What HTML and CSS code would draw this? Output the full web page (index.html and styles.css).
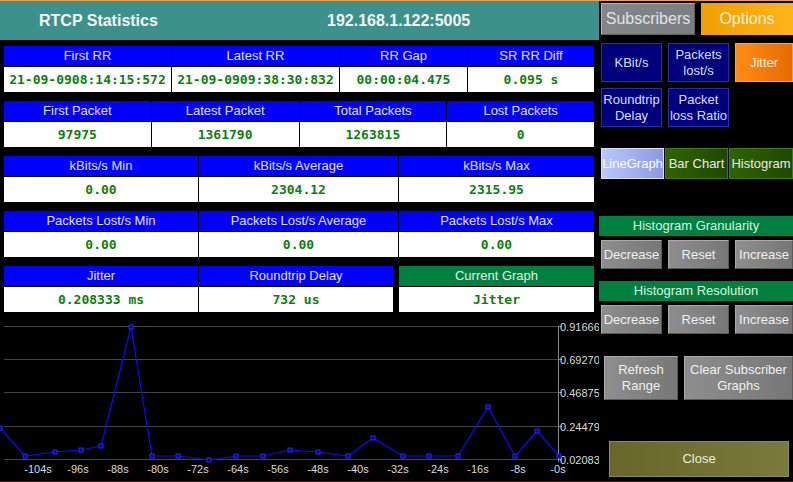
FILE: index.html
```html
<!DOCTYPE html>
<html>
<head>
<meta charset="utf-8">
<link rel="stylesheet" href="styles.css">
</head>
<body>
<div class="app">
  <div class="left">
    <div class="title-bar"><span class="title">RTCP Statistics</span><span class="addr">192.168.1.122:5005</span></div>
    <div class="tables">
      <div class="stat t1">
        <div class="h">First RR</div><div class="h">Latest RR</div><div class="h">RR Gap</div><div class="h">SR RR Diff</div>
        <div class="v">21-09-0908:14:15:572</div><div class="v">21-09-0909:38:30:832</div><div class="v">00:00:04.475</div><div class="v">0.095 s</div>
      </div>
      <div class="stat t2">
        <div class="h">First Packet</div><div class="h">Latest Packet</div><div class="h">Total Packets</div><div class="h">Lost Packets</div>
        <div class="v">97975</div><div class="v">1361790</div><div class="v">1263815</div><div class="v">0</div>
      </div>
      <div class="stat t3">
        <div class="h">kBits/s Min</div><div class="h">kBits/s Average</div><div class="h">kBits/s Max</div>
        <div class="v">0.00</div><div class="v">2304.12</div><div class="v">2315.95</div>
      </div>
      <div class="stat t3">
        <div class="h">Packets Lost/s Min</div><div class="h">Packets Lost/s Average</div><div class="h">Packets Lost/s Max</div>
        <div class="v">0.00</div><div class="v">0.00</div><div class="v">0.00</div>
      </div>
      <div class="stat t5">
        <div class="h">Jitter</div><div class="h">Roundtrip Delay</div><div class="sp"></div><div class="h hg">Current Graph</div>
        <div class="v">0.208333 ms</div><div class="v">732 us</div><div class="sp"></div><div class="v">Jitter</div>
      </div>
    </div>
    <svg class="graph" width="599" height="169" viewBox="0 312 599 169">
      <g class="grid">
        <line x1="4" y1="326.5" x2="558" y2="326.5"/>
        <line x1="4" y1="359.5" x2="558" y2="359.5"/>
        <line x1="4" y1="392.5" x2="558" y2="392.5"/>
        <line x1="4" y1="426.5" x2="558" y2="426.5"/>
        <line x1="4" y1="459.5" x2="558" y2="459.5"/>
      </g>
      <g class="axis">
        <line x1="558.5" y1="326" x2="558.5" y2="462"/>
        <line x1="558" y1="326.5" x2="562" y2="326.5"/>
        <line x1="558" y1="359.5" x2="562" y2="359.5"/>
        <line x1="558" y1="392.5" x2="562" y2="392.5"/>
        <line x1="558" y1="426.5" x2="562" y2="426.5"/>
        <line x1="558" y1="459.5" x2="562" y2="459.5"/>
      </g>
      <g class="ylab">
        <text x="560" y="327">0.91666</text>
        <text x="560" y="360">0.69270</text>
        <text x="560" y="393">0.46875</text>
        <text x="560" y="427">0.24479</text>
        <text x="560" y="460">0.02083</text>
      </g>
      <g class="xlab">
        <text x="38" y="469">-104s</text>
        <text x="78" y="469">-96s</text>
        <text x="118" y="469">-88s</text>
        <text x="158" y="469">-80s</text>
        <text x="198" y="469">-72s</text>
        <text x="238" y="469">-64s</text>
        <text x="278" y="469">-56s</text>
        <text x="318" y="469">-48s</text>
        <text x="358" y="469">-40s</text>
        <text x="398" y="469">-32s</text>
        <text x="438" y="469">-24s</text>
        <text x="478" y="469">-16s</text>
        <text x="518" y="469">-8s</text>
        <text x="558" y="469">-0s</text>
      </g>
      <polyline class="line" points="0,428 25,456 55,452 81,450 101,446 131,327 152,456 178,456 209,460 236,456 263,456 290,450 318,452 348,456 373,438 403,456 429,456 458,456 488,407 515,456 537,431 559,456"/>
      <g class="mk">
        <rect x="-2" y="426" width="4" height="4"/>
        <rect x="23" y="454" width="4" height="4"/>
        <rect x="53" y="450" width="4" height="4"/>
        <rect x="79" y="448" width="4" height="4"/>
        <rect x="99" y="444" width="4" height="4"/>
        <rect x="129" y="325" width="4" height="4"/>
        <rect x="150" y="454" width="4" height="4"/>
        <rect x="176" y="454" width="4" height="4"/>
        <rect x="207" y="458" width="4" height="4"/>
        <rect x="234" y="454" width="4" height="4"/>
        <rect x="261" y="454" width="4" height="4"/>
        <rect x="288" y="448" width="4" height="4"/>
        <rect x="316" y="450" width="4" height="4"/>
        <rect x="346" y="454" width="4" height="4"/>
        <rect x="371" y="436" width="4" height="4"/>
        <rect x="401" y="454" width="4" height="4"/>
        <rect x="427" y="454" width="4" height="4"/>
        <rect x="456" y="454" width="4" height="4"/>
        <rect x="486" y="405" width="4" height="4"/>
        <rect x="513" y="454" width="4" height="4"/>
        <rect x="535" y="429" width="4" height="4"/>
        <rect x="557" y="454" width="4" height="4"/>
      </g>
    </svg>
  </div>
  <div class="right">
    <div class="row r1">
      <div class="btn sub">Subscribers</div>
      <div class="btn opt">Options</div>
    </div>
    <div class="row r2">
      <div class="btn navy w61">KBit/s</div>
      <div class="btn navy w61">Packets<br>lost/s</div>
      <div class="btn orange w58">Jitter</div>
    </div>
    <div class="row r3">
      <div class="btn navy w61">Roundtrip<br>Delay</div>
      <div class="btn navy w61">Packet<br>loss Ratio</div>
    </div>
    <div class="row r4">
      <div class="btn lg">LineGraph</div>
      <div class="btn grn">Bar Chart</div>
      <div class="btn grn hist">Histogram</div>
    </div>
    <div class="sect s1">Histogram Granularity</div>
    <div class="row r5">
      <div class="btn gray w61">Decrease</div>
      <div class="btn gray w61">Reset</div>
      <div class="btn gray w58">Increase</div>
    </div>
    <div class="sect s2">Histogram Resolution</div>
    <div class="row r5">
      <div class="btn gray w61">Decrease</div>
      <div class="btn gray w61">Reset</div>
      <div class="btn gray w58">Increase</div>
    </div>
    <div class="row r6">
      <div class="btn gray refresh">Refresh<br>Range</div>
      <div class="btn gray clear">Clear Subscriber<br>Graphs</div>
    </div>
    <div class="btn closeb">Close</div>
  </div>
</div>
</body>
</html>
```
FILE: styles.css
```css
html, body {
  margin: 0;
  padding: 0;
  background: #000;
}
body {
  font-family: "Liberation Sans", Arial, sans-serif;
  width: 793px;
  height: 482px;
  overflow: hidden;
}
.app {
  display: flex;
  height: 482px;
  box-sizing: border-box;
  border-top: 1px solid #e9a04c;
  border-bottom: 1px solid #3c2208;
}
.left {
  width: 599px;
  display: flex;
  flex-direction: column;
}
.title-bar {
  height: 39px;
  background: #3d918d;
  display: flex;
  align-items: center;
  font-weight: bold;
  font-size: 16px;
  color: #f4f4f4;
}
.title {
  margin-left: 39px;
  width: 288px;
}
.tables {
  padding: 6px 5px 0 4px;
  display: flex;
  flex-direction: column;
  gap: 9px;
}
.stat {
  display: grid;
  grid-template-rows: 20px 25px;
  column-gap: 1px;
  row-gap: 1px;
}
.t1 { grid-template-columns: 167px 167px 127px 126px; }
.t2 { grid-template-columns: repeat(4, 1fr); }
.t3 { grid-template-columns: 194px 199px 195px; }
.t5 { grid-template-columns: 194px 194px 4px 195px; }
.h {
  background: #0000ff;
  color: #e4e4ff;
  font-size: 13px;
  line-height: 20px;
  text-align: center;
  white-space: nowrap;
}
.hg {
  background: #00803f;
  color: #e0f0e6;
}
.v {
  background: #fff;
  color: #0c800c;
  font-family: "DejaVu Sans Mono", monospace;
  font-weight: bold;
  font-size: 13px;
  line-height: 25px;
  text-align: center;
  white-space: nowrap;
}
.sp { background: transparent; }
.graph {
  display: block;
}
.grid line {
  stroke: #444;
  stroke-width: 1;
}
.axis line {
  stroke: #8a8a8a;
  stroke-width: 1;
}
.ylab text, .xlab text {
  font-family: "Liberation Sans", Arial, sans-serif;
  font-size: 11px;
  fill: #dadada;
  dominant-baseline: central;
}
.xlab text {
  text-anchor: middle;
}
.line {
  fill: none;
  stroke: #0a0aff;
  stroke-width: 1.2;
}
.mk rect {
  fill: #0000a0;
  stroke: #2a2aff;
  stroke-width: 1;
}
.right {
  width: 194px;
  display: flex;
  flex-direction: column;
}
.row {
  display: flex;
  margin-left: 2px;
  gap: 6px;
}
.btn {
  box-sizing: border-box;
  display: flex;
  align-items: center;
  justify-content: center;
  text-align: center;
  font-size: 13px;
  line-height: 16px;
  white-space: nowrap;
}
.r1 { margin-top: 2px; height: 32px; }
.r2 { margin-top: 8px; height: 39px; }
.r3 { margin-top: 6px; height: 39px; }
.r4 { margin-top: 21px; height: 31px; gap: 1px; }
.r5 { margin-top: 4px; height: 29px; }
.r6 { margin-top: 22px; height: 44px; margin-left: 5px; }
.w61 { width: 61px; }
.w58 { width: 58px; }
.sub {
  width: 94px;
  font-size: 16px;
  color: #e2e2e2;
  background: linear-gradient(90deg, #84878a, #7b7e81);
  border: 1px solid;
  border-color: #b6b8ba #5c5e60 #5c5e60 #b6b8ba;
}
.opt {
  flex: 1;
  font-size: 16px;
  color: #fff2dc;
  background: linear-gradient(90deg, #eea000, #ffb41a);
}
.navy {
  background: #00007c;
  border: 1px solid #2c2ca4;
  color: #dedeff;
}
.orange {
  background: linear-gradient(90deg, #ff8c14, #e86a00);
  border: 1px solid #ffa448;
  color: #fff2e4;
}
.lg {
  width: 63px;
  background: linear-gradient(90deg, #bac8fb, #8a9ae2);
  border: 1px solid #dae2ff;
  color: #fff;
}
.grn {
  width: 63px;
  background: linear-gradient(90deg, #2f6300, #1e4800);
  border: 1px solid #3e7a12;
  color: #eaeaea;
}
.hist { width: 64px; }
.sect {
  height: 20px;
  background: #00803f;
  color: #dcf2e4;
  font-size: 13px;
  line-height: 20px;
  text-align: center;
}
.s1 { margin-top: 37px; }
.s2 { margin-top: 12px; }
.gray {
  background: linear-gradient(90deg, #8e8e8e, #777);
  border: 1px solid;
  border-color: #aaa #5a5a5a #5a5a5a #aaa;
  color: #f0f0f0;
}
.refresh { width: 74px; }
.clear { width: 109px; }
.closeb {
  margin-top: 41px;
  margin-left: 10px;
  width: 180px;
  height: 36px;
  background: linear-gradient(90deg, #67672b, #7a7a3c);
  border: 1px solid #8c8c4e;
  color: #ececdc;
}
```
